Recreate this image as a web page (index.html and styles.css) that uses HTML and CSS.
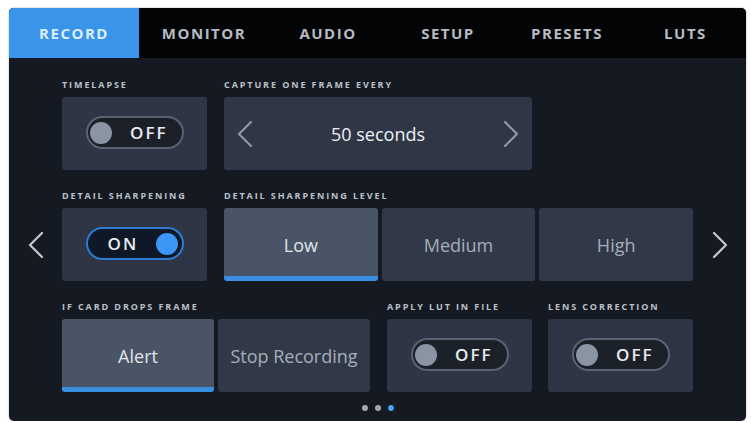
FILE: index.html
```html
<!DOCTYPE html>
<html lang="en">
<head>
<meta charset="utf-8">
<title>Record settings</title>
<link rel="stylesheet" href="styles.css">
</head>
<body>
<div class="screen">
  <nav class="tabs">
    <div class="tab active">RECORD</div>
    <div class="tab">MONITOR</div>
    <div class="tab">AUDIO</div>
    <div class="tab">SETUP</div>
    <div class="tab">PRESETS</div>
    <div class="tab">LUTS</div>
  </nav>

  <main class="page">
    <div class="row first">
      <div class="side"></div>
      <div class="fields">
        <div class="field narrow">
          <div class="label">TIMELAPSE</div>
          <div class="box">
            <div class="toggle off"><span class="knob"></span><span class="ttext">OFF</span></div>
          </div>
        </div>
        <div class="field wide">
          <div class="label">CAPTURE ONE FRAME EVERY</div>
          <div class="box stepper">
            <svg class="chev" viewBox="0 0 16 26" width="16" height="26"><polyline points="14,1 2,13 14,25" /></svg>
            <span class="value">50 seconds</span>
            <svg class="chev" viewBox="0 0 16 26" width="16" height="26"><polyline points="2,1 14,13 2,25" /></svg>
          </div>
        </div>
      </div>
      <div class="side"></div>
    </div>

    <div class="row">
      <div class="side">
        <svg class="page-chev" viewBox="0 0 16 26" width="16" height="26"><polyline points="14,1 2,13 14,25" /></svg>
      </div>
      <div class="fields">
        <div class="field narrow">
          <div class="label">DETAIL SHARPENING</div>
          <div class="box">
            <div class="toggle on"><span class="ttext">ON</span><span class="knob"></span></div>
          </div>
        </div>
        <div class="field grow">
          <div class="label">DETAIL SHARPENING LEVEL</div>
          <div class="seg">
            <div class="opt selected">Low</div>
            <div class="opt">Medium</div>
            <div class="opt">High</div>
          </div>
        </div>
      </div>
      <div class="side">
        <svg class="page-chev" viewBox="0 0 16 26" width="16" height="26"><polyline points="2,1 14,13 2,25" /></svg>
      </div>
    </div>

    <div class="row">
      <div class="side"></div>
      <div class="fields">
        <div class="field wide">
          <div class="label">IF CARD DROPS FRAME</div>
          <div class="seg">
            <div class="opt selected">Alert</div>
            <div class="opt">Stop Recording</div>
          </div>
        </div>
        <div class="field narrow">
          <div class="label">APPLY LUT IN FILE</div>
          <div class="box">
            <div class="toggle off"><span class="knob"></span><span class="ttext">OFF</span></div>
          </div>
        </div>
        <div class="field narrow last">
          <div class="label">LENS CORRECTION</div>
          <div class="box">
            <div class="toggle off"><span class="knob"></span><span class="ttext">OFF</span></div>
          </div>
        </div>
      </div>
      <div class="side"></div>
    </div>

    <div class="dots">
      <span class="dot"></span><span class="dot"></span><span class="dot current"></span>
    </div>
  </main>
</div>
</body>
</html>
```

FILE: styles.css
```css
html, body {
  margin: 0;
  padding: 0;
  background: #ffffff;
}

body {
  font-family: "Open Sans", "DejaVu Sans", sans-serif;
}

.screen {
  width: 737px;
  height: 413px;
  margin: 8px 0 0 9px;
  background: #151a22;
  border-radius: 5px;
  overflow: hidden;
  box-shadow: 0 0 2px rgba(0, 0, 0, 0.35);
  display: flex;
  flex-direction: column;
}

/* Tabs */
.tabs {
  height: 50px;
  background: #030405;
  display: grid;
  grid-template-columns: 130px 130px 118px 122px 116px 1fr;
  flex: none;
}

.tab {
  display: flex;
  align-items: center;
  justify-content: center;
  font-weight: 700;
  font-size: 15px;
  letter-spacing: 1.5px;
  color: #b8bbc1;
}

.tab.active {
  background: #3a94ea;
  color: #dcefff;
}

/* Page body */
.page {
  flex: 1;
  display: flex;
  flex-direction: column;
  padding-top: 1px;
}

.row {
  display: grid;
  grid-template-columns: 53px 631px 53px;
  margin-top: 18px;
}

.side {
  height: 73px;
  align-self: end;
  display: flex;
  align-items: center;
  justify-content: center;
}

.page-chev {
  fill: none;
  stroke: #c4c9d1;
  stroke-width: 2.2;
  stroke-linecap: round;
  stroke-linejoin: round;
}

.fields {
  display: flex;
  gap: 17px;
}

.field {
  display: flex;
  flex-direction: column;
  gap: 4px;
}

.field.narrow { width: 145px; }
.field.wide { width: 308px; }
.field.grow { flex: 1; }
.field.last { margin-left: -1px; }

.label {
  height: 16px;
  line-height: 16px;
  font-size: 9px;
  font-weight: 700;
  letter-spacing: 1.9px;
  color: #bcc1c9;
  white-space: nowrap;
}

.box {
  height: 73px;
  background: #2e3544;
  border-radius: 3px;
  display: flex;
  align-items: center;
  justify-content: center;
}

/* Toggle */
.toggle {
  box-sizing: border-box;
  width: 98px;
  height: 33px;
  border-radius: 17px;
  border: 2px solid #5b6372;
  background: #1c2129;
  display: flex;
  align-items: center;
  justify-content: space-between;
  margin-top: -2px;
}

.toggle.off { padding: 0 14px 0 2px; }
.toggle.on {
  padding: 0 4px 0 20px;
  border-color: #2d7cd2;
  background: #0e1827;
}

.knob {
  width: 22px;
  height: 22px;
  border-radius: 50%;
  background: #8b94a3;
}

.toggle.on .knob { background: #3b97f4; }

.ttext {
  font-size: 17px;
  font-weight: 600;
  letter-spacing: 2px;
  color: #e8ebef;
  line-height: 1;
}

/* Stepper */
.stepper {
  justify-content: space-between;
  padding: 0 13px 0 13px;
  background: #2f3747;
}

.chev {
  fill: none;
  stroke: #8e97a6;
  stroke-width: 2.2;
  stroke-linecap: round;
  stroke-linejoin: round;
}

.value {
  font-size: 18px;
  font-weight: 500;
  color: #eef0f3;
}

/* Segmented options */
.seg {
  display: flex;
  gap: 4px;
  height: 73px;
}

.opt {
  flex: 1;
  box-sizing: border-box;
  background: #313948;
  border-radius: 3px;
  display: flex;
  align-items: center;
  justify-content: center;
  font-size: 18px;
  font-weight: 500;
  color: #a7aeb9;
}

.opt.selected {
  background: #4a5467;
  color: #e0e4ea;
  border-bottom: 5px solid #3a8fe2;
  padding-top: 5px;
}

/* Page dots */
.dots {
  display: flex;
  justify-content: center;
  gap: 7px;
  margin-top: 13px;
}

.dot {
  width: 6px;
  height: 6px;
  border-radius: 50%;
  background: #a2a8b2;
}

.dot.current { background: #4aa1f2; }
```
